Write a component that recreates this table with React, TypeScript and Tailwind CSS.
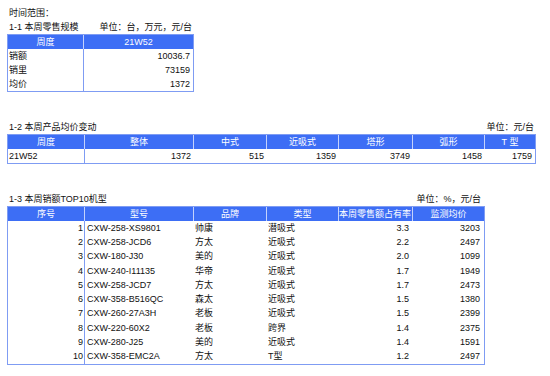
import React from "react";

type Align = "l" | "r";

const H = "h-[14px] bg-[#3d6ef5] text-white flex items-center justify-center whitespace-nowrap overflow-hidden";
const HB = "h-[14px] bg-[#3d6ef5] text-white flex items-center justify-center whitespace-nowrap overflow-hidden border-r border-[#c4d2fc]";

function Cells({ headers, rows, aligns, rowH }: { headers: string[]; rows: string[][]; aligns: Align[]; rowH: string }) {
  return (
    <>
      {headers.map((h, i) => (
        <div key={"h" + i} className={i === headers.length - 1 ? H : HB}>
          {h}
        </div>
      ))}
      {rows.map((r, ri) =>
        r.map((c, ci) => {
          const a = aligns[ci];
          const base =
            a === "r"
              ? "flex items-center justify-end whitespace-nowrap overflow-hidden pr-[3px]"
              : "flex items-center justify-start whitespace-nowrap overflow-hidden pl-[1px]";
          const first = ci === 0 ? " border-r border-[#7f9cf3]" : "";
          return (
            <div key={ri + "-" + ci} className={base + first + " " + rowH}>
              {c}
            </div>
          );
        })
      )}
    </>
  );
}

export default function App() {
  return (
    <div className="w-[550px] h-[376px] bg-white pl-[7px] pt-[6px] font-['Liberation_Sans','Noto_Sans_CJK_SC',sans-serif] text-[9px] leading-none text-[#111]">
      <div className="h-[14px] flex items-center pl-[2px]">时间范围：</div>

      {/* 1-1 */}
      <div className="w-[187px]">
        <div className="h-[14px] flex items-center justify-between pl-[2px] pr-[2px]">
          <span>1-1 本周零售规模</span>
          <span>单位：台，万元，元/台</span>
        </div>
        <div className="grid grid-cols-[76px_109px] border border-[#7f9cf3]">
          <div className={HB}>周度</div>
          <div className={H}>21W52</div>
          {[
            ["销额", "10036.7"],
            ["销里", "73159"],
            ["均价", "1372"],
          ].map((r, i) => (
            <React.Fragment key={i}>
              <div className="h-[14px] flex items-center pl-[1px] border-r border-[#7f9cf3]">{r[0]}</div>
              <div className="h-[14px] flex items-center justify-end pr-[3px]">{r[1]}</div>
            </React.Fragment>
          ))}
        </div>
      </div>

      {/* 1-2 */}
      <div className="w-[529px] mt-[28px]">
        <div className="h-[14px] flex items-center justify-between pl-[2px] pr-[2px]">
          <span>1-2 本周产品均价变动</span>
          <span>单位：元/台</span>
        </div>
        <div className="grid grid-cols-[77px_109px_73px_72px_74px_72px_50px] border border-[#7f9cf3]">
          <Cells
            headers={["周度", "整体", "中式", "近吸式", "塔形", "弧形", "T 型"]}
            rows={[["21W52", "1372", "515", "1359", "3749", "1458", "1759"]]}
            aligns={["l", "r", "r", "r", "r", "r", "r"]}
            rowH="h-[14px]"
          />
        </div>
      </div>

      {/* 1-3 */}
      <div className="w-[478px] mt-[28px]">
        <div className="h-[14px] flex items-center justify-between pl-[2px] pr-[4px]">
          <span>1-3 本周销额TOP10机型</span>
          <span>单位：%，元/台</span>
        </div>
        <div className="grid grid-cols-[77px_109px_73px_72px_74px_71px] border border-[#7f9cf3]">
          <div className={HB}>序号</div>
          <div className={HB}>型号</div>
          <div className={HB}>品牌</div>
          <div className={HB}>类型</div>
          <div className="h-[14px] bg-[#3d6ef5] text-white flex items-center justify-start whitespace-nowrap overflow-hidden border-r border-[#c4d2fc]">
            本周零售额占有率
          </div>
          <div className={H}>监测均价</div>
          {[
            ["1", "CXW-258-XS9801", "帅康", "潜吸式", "3.3", "3203"],
            ["2", "CXW-258-JCD6", "方太", "近吸式", "2.2", "2497"],
            ["3", "CXW-180-J30", "美的", "近吸式", "2.0", "1099"],
            ["4", "CXW-240-I11135", "华帝", "近吸式", "1.7", "1949"],
            ["5", "CXW-258-JCD7", "方太", "近吸式", "1.7", "2473"],
            ["6", "CXW-358-B516QC", "森太", "近吸式", "1.5", "1380"],
            ["7", "CXW-260-27A3H", "老板", "近吸式", "1.5", "2399"],
            ["8", "CXW-220-60X2", "老板", "跨界", "1.4", "2375"],
            ["9", "CXW-280-J25", "美的", "近吸式", "1.4", "1591"],
            ["10", "CXW-358-EMC2A", "方太", "T型", "1.2", "2497"],
          ].map((r, i) => (
            <React.Fragment key={i}>
              <div className="h-[14.3px] flex items-center justify-end pr-[1px] border-r border-[#7f9cf3]">{r[0]}</div>
              <div className="h-[14.3px] flex items-center pl-[2px]">{r[1]}</div>
              <div className="h-[14.3px] flex items-center pl-[1px]">{r[2]}</div>
              <div className="h-[14.3px] flex items-center pl-[1px]">{r[3]}</div>
              <div className="h-[14.3px] flex items-center justify-end pr-[4px]">{r[4]}</div>
              <div className="h-[14.3px] flex items-center justify-end pr-[4px]">{r[5]}</div>
            </React.Fragment>
          ))}
        </div>
      </div>
    </div>
  );
}
